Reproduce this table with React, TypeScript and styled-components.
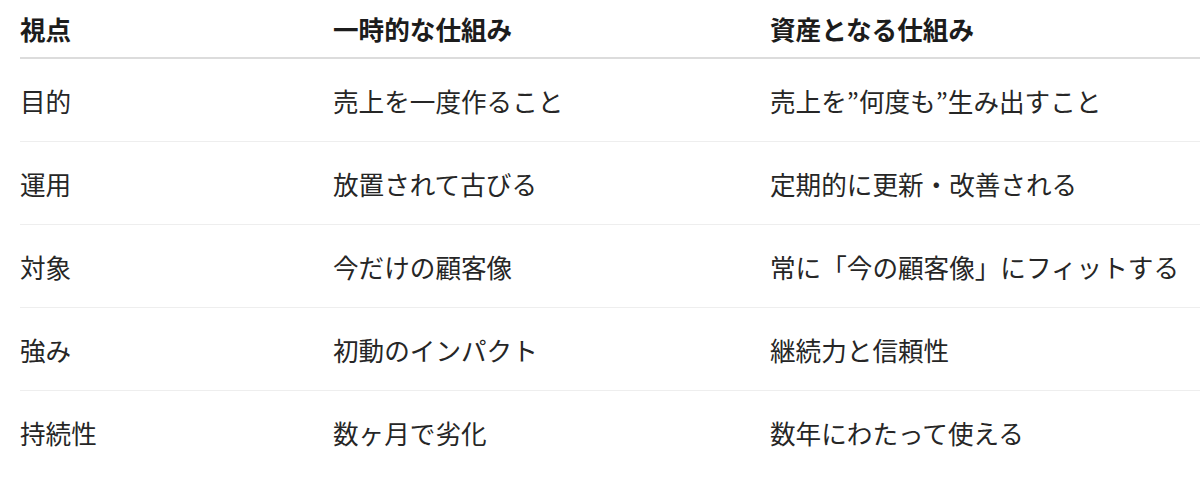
import React from "react";
import styled, { createGlobalStyle } from "styled-components";

const Global = createGlobalStyle`
  html, body { margin: 0; padding: 0; background: #fff; }
  body { font-family: "Noto Sans CJK JP", "Noto Sans", sans-serif; }
`;

const Table = styled.div`
  margin-left: 20px;
  display: grid;
  grid-template-columns: 313px 437px 1fr;
`;

const HeadCell = styled.div`
  height: 57px;
  display: flex;
  align-items: center;
  border-bottom: 2px solid #dcdcdc;
  font-size: 25.6px;
  font-weight: 700;
  color: #1c1c1c;
  white-space: nowrap;
`;

const Cell = styled.div<{ $last?: boolean }>`
  height: 82px;
  display: flex;
  align-items: center;
  border-bottom: ${(p) => (p.$last ? "1px solid transparent" : "1px solid #eeeeee")};
  font-size: 25.6px;
  font-weight: 400;
  color: #262626;
  white-space: nowrap;
`;

const rows: [string, string, string][] = [
  ["目的", "売上を一度作ること", "売上を”何度も”生み出すこと"],
  ["運用", "放置されて古びる", "定期的に更新・改善される"],
  ["対象", "今だけの顧客像", "常に「今の顧客像」にフィットする"],
  ["強み", "初動のインパクト", "継続力と信頼性"],
  ["持続性", "数ヶ月で劣化", "数年にわたって使える"],
];

export default function App() {
  return (
    <>
      <Global />
      <Table>
        <HeadCell>視点</HeadCell>
        <HeadCell>一時的な仕組み</HeadCell>
        <HeadCell>資産となる仕組み</HeadCell>
        {rows.map((r, i) =>
          r.map((c, j) => (
            <Cell key={`${i}-${j}`} $last={i === rows.length - 1}>
              {c}
            </Cell>
          ))
        )}
      </Table>
    </>
  );
}
